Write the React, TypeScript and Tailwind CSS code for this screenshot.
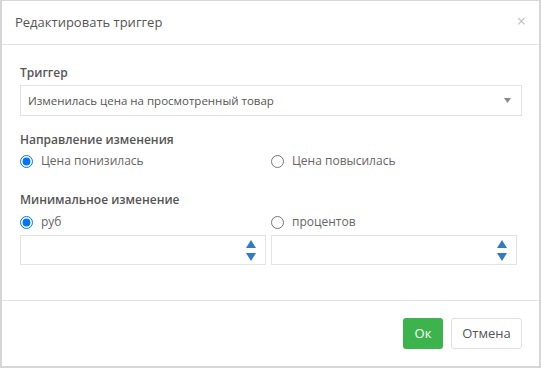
import { useState } from "react";

function Spinner() {
  return (
    <div className="flex flex-col items-center gap-[5px]">
      <svg width="10" height="8" viewBox="0 0 10 8">
        <path d="M5 0 L10 8 L0 8 Z" fill="#2f7bc6" />
      </svg>
      <svg width="10" height="8" viewBox="0 0 10 8">
        <path d="M0 0 L10 0 L5 8 Z" fill="#2f7bc6" />
      </svg>
    </div>
  );
}

function Radio({ checked, label, onClick }: { checked: boolean; label: string; onClick: () => void }) {
  return (
    <label className="flex items-center gap-[8px] cursor-pointer" onClick={onClick}>
      <input
        type="radio"
        readOnly
        checked={checked}
        className="m-0 size-[13px] accent-[#0075ff]"
      />
      <span className="text-[12px] text-[#666]">{label}</span>
    </label>
  );
}

export default function App() {
  const [direction, setDirection] = useState("down");
  const [unit, setUnit] = useState("rub");

  return (
    <div
      className="w-[541px] h-[368px] flex flex-col bg-white border-x-2 border-b-2 border-t border-[#d6d6d6] text-[#555]"
      style={{ fontFamily: '"Open Sans", "Noto Sans", sans-serif' }}
    >
      <div className="h-[44px] flex items-center justify-between pl-[13px] pr-[13px] border-b border-[#e5e5e5]">
        <h4 className="text-[13px] text-[#555]">Редактировать триггер</h4>
        <span className="text-[16px] leading-none text-[#c2c2c2] -mt-[4px]">×</span>
      </div>

      <div className="flex-1 px-[18px] pt-[19px]">
        <div className="text-[12px] font-semibold leading-[18px]">Триггер</div>
        <div className="mt-[3px] h-[31px] flex items-center justify-between border border-[#e3e3e3] pl-[7px] pr-[10px] w-[502px]">
          <span className="text-[11.5px] text-[#555]">Изменилась цена на просмотренный товар</span>
          <svg width="7" height="5" viewBox="0 0 7 5">
            <path d="M0 0 L7 0 L3.5 5 Z" fill="#8a8a8a" />
          </svg>
        </div>

        <div className="mt-[15px] text-[12px] font-semibold leading-[18px]">Направление изменения</div>
        <div className="mt-[2px] grid grid-cols-2 w-[502px] h-[20px]">
          <Radio checked={direction === "down"} label="Цена понизилась" onClick={() => setDirection("down")} />
          <Radio checked={direction === "up"} label="Цена повысилась" onClick={() => setDirection("up")} />
        </div>

        <div className="mt-[20px] text-[12px] font-semibold leading-[18px]">Минимальное изменение</div>
        <div className="mt-[3px] grid grid-cols-2 w-[502px] h-[20px]">
          <Radio checked={unit === "rub"} label="руб" onClick={() => setUnit("rub")} />
          <Radio checked={unit === "pct"} label="процентов" onClick={() => setUnit("pct")} />
        </div>
        <div className="mt-[3px] grid grid-cols-2 w-[502px]">
          <div className="w-[246px] h-[30px] flex items-center justify-end border border-[#e3e3e3] pr-[9px]">
            <Spinner />
          </div>
          <div className="w-[246px] h-[30px] flex items-center justify-end border border-[#e3e3e3] pr-[9px]">
            <Spinner />
          </div>
        </div>
      </div>

      <div className="h-[66px] flex items-center justify-end gap-[8px] border-t border-[#e5e5e5] pr-[17px]">
        <button className="w-[40px] h-[31px] rounded-[3px] bg-[#3cb44b] text-white text-[13px]">Ок</button>
        <button className="w-[71px] h-[31px] rounded-[3px] border border-[#e0e0e0] bg-white text-[#555] text-[13px]">
          Отмена
        </button>
      </div>
    </div>
  );
}
